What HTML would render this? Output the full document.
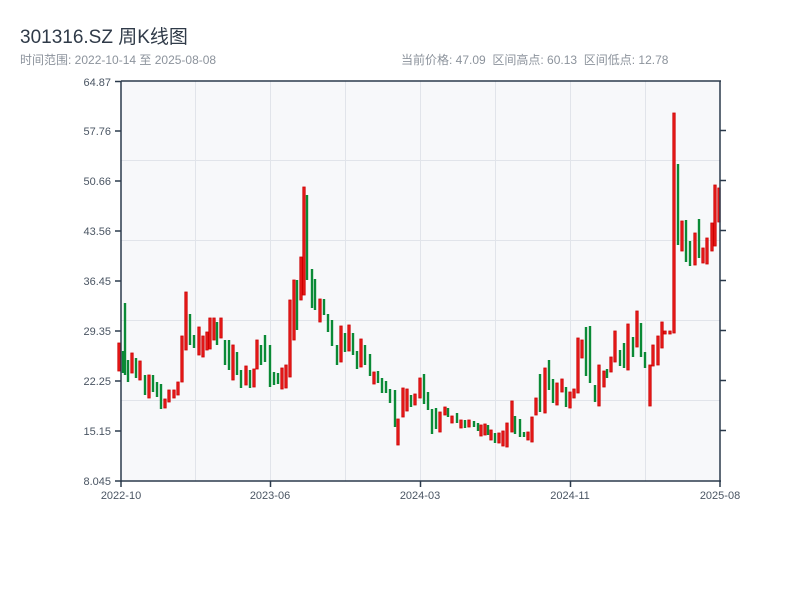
<!DOCTYPE html>
<html><head><meta charset="utf-8"><style>
html,body{margin:0;padding:0;background:#fff;width:800px;height:600px;overflow:hidden;font-family:"Liberation Sans","Noto Sans CJK SC",sans-serif}
.t{position:absolute;left:20px;top:22px;font-size:19px;color:#2f3a48}
.s{position:absolute;left:20px;top:51px;font-size:12px;color:#8c939c}
.r{position:absolute;left:401px;top:51px;font-size:12px;color:#8c939c;white-space:pre}
svg{position:absolute;left:0;top:0}
</style></head><body>
<div class="t">301316.SZ 周K线图</div>
<div class="s">时间范围: 2022-10-14 至 2025-08-08</div>
<div class="r">当前价格: 47.09  区间高点: 60.13  区间低点: 12.78</div>
<svg id="c" width="800" height="600" xmlns="http://www.w3.org/2000/svg" font-family="Liberation Sans, sans-serif" font-size="11" fill="#4a5563">
<rect x="121" y="81" width="599" height="400" fill="#f7f8fa"/>
<g stroke="#e1e4ea" stroke-width="1">
<line x1="195.5" y1="81" x2="195.5" y2="481"/><line x1="270.5" y1="81" x2="270.5" y2="481"/><line x1="345.5" y1="81" x2="345.5" y2="481"/><line x1="420.5" y1="81" x2="420.5" y2="481"/><line x1="495.5" y1="81" x2="495.5" y2="481"/><line x1="570.5" y1="81" x2="570.5" y2="481"/><line x1="645.5" y1="81" x2="645.5" y2="481"/>
<line x1="121" y1="160.5" x2="720" y2="160.5"/><line x1="121" y1="240.5" x2="720" y2="240.5"/><line x1="121" y1="320.5" x2="720" y2="320.5"/><line x1="121" y1="400.5" x2="720" y2="400.5"/>
</g>
<g id="k"></g>
<g stroke="#2b3a4c" stroke-width="1.5">
<line x1="121" y1="81" x2="721" y2="81"/><line x1="121" y1="81" x2="121" y2="482"/><line x1="121" y1="481" x2="721" y2="481"/><line x1="720" y1="81" x2="720" y2="482"/>
<line x1="115" y1="81.5" x2="121" y2="81.5"/><line x1="115" y1="131" x2="121" y2="131"/><line x1="115" y1="181" x2="121" y2="181"/><line x1="115" y1="231" x2="121" y2="231"/><line x1="115" y1="281" x2="121" y2="281"/><line x1="115" y1="331" x2="121" y2="331"/><line x1="115" y1="381" x2="121" y2="381"/><line x1="115" y1="431" x2="121" y2="431"/><line x1="115" y1="481" x2="121" y2="481"/>
<line x1="720" y1="130.5" x2="726" y2="130.5"/><line x1="720" y1="180.5" x2="726" y2="180.5"/><line x1="720" y1="230.5" x2="726" y2="230.5"/><line x1="720" y1="280.5" x2="726" y2="280.5"/><line x1="720" y1="330.5" x2="726" y2="330.5"/><line x1="720" y1="380.5" x2="726" y2="380.5"/><line x1="720" y1="430.5" x2="726" y2="430.5"/>
<line x1="121" y1="481" x2="121" y2="487"/><line x1="270.5" y1="481" x2="270.5" y2="487"/><line x1="420.5" y1="481" x2="420.5" y2="487"/><line x1="570.5" y1="481" x2="570.5" y2="487"/><line x1="720" y1="481" x2="720" y2="487"/>
</g>
<g text-anchor="end">
<text x="111" y="86">64.87</text><text x="111" y="135">57.76</text><text x="111" y="185">50.66</text><text x="111" y="235">43.56</text><text x="111" y="285">36.45</text><text x="111" y="335">29.35</text><text x="111" y="385">22.25</text><text x="111" y="435">15.15</text><text x="111" y="485">8.045</text>
</g>
<g text-anchor="middle">
<text x="121" y="499">2022-10</text><text x="270" y="499">2023-06</text><text x="420" y="499">2024-03</text><text x="570" y="499">2024-11</text><text x="720" y="499">2025-08</text>
</g>
</svg>
<script>
var d=[
[119,343,371,'r'],[123,351,373,'g'],[125,303,375,'g'],[128,360,382,'g'],[132,353,373,'r'],[136,358,378,'g'],[140,361,380,'r'],[145,375,395,'g'],[149,375,398,'r'],[153,375,392,'g'],[157,382,397,'g'],[161,384,409,'g'],[165,399,408,'r'],[169,390,402,'r'],[174,390,398,'r'],[178,382,395,'r'],[182,336,382,'r'],[186,292,350,'r'],[190,314,345,'g'],[194,335,348,'g'],[199,327,355,'r'],[203,336,357,'r'],[207,332,350,'r'],[210,318,349,'r'],[214,318,340,'r'],[217,322,345,'g'],[221,318,338,'r'],[225,340,365,'g'],[229,340,370,'g'],[233,345,380,'r'],[237,352,375,'g'],[241,370,388,'g'],[246,366,385,'r'],[250,370,388,'g'],[254,369,387,'r'],[257,340,369,'r'],[261,345,365,'g'],[265,335,362,'g'],[270,345,387,'g'],[274,372,385,'g'],[278,373,384,'g'],[282,368,389,'r'],[286,365,388,'r'],[290,300,377,'r'],[294,280,340,'r'],[297,280,330,'g'],[301,257,300,'r'],[304,187,295,'r'],[307,195,280,'g'],[312,269,308,'g'],[315,279,310,'g'],[320,299,322,'r'],[324,299,315,'g'],[328,314,332,'g'],[332,320,346,'g'],[337,345,365,'g'],[341,326,362,'r'],[345,333,352,'g'],[349,325,351,'r'],[353,333,355,'g'],[357,351,369,'g'],[361,339,367,'r'],[365,345,365,'g'],[370,354,376,'g'],[374,372,384,'r'],[378,371,383,'g'],[382,378,393,'g'],[386,381,393,'g'],[390,389,403,'g'],[395,390,427,'g'],[398,419,445,'r'],[403,388,417,'r'],[407,389,411,'r'],[411,395,407,'g'],[415,394,405,'r'],[420,378,398,'r'],[424,374,404,'g'],[428,392,410,'g'],[432,409,434,'g'],[436,408,429,'g'],[440,412,432,'r'],[445,407,415,'r'],[448,408,417,'g'],[452,416,423,'r'],[457,413,423,'g'],[461,420,428,'r'],[465,420,428,'g'],[469,420,427,'r'],[474,421,427,'g'],[478,423,431,'g'],[481,425,436,'r'],[485,424,435,'r'],[488,425,435,'g'],[491,430,440,'r'],[495,433,443,'g'],[499,433,443,'r'],[503,431,446,'r'],[507,423,447,'r'],[512,401,432,'r'],[515,416,434,'g'],[520,419,437,'g'],[524,432,437,'g'],[528,432,440,'r'],[532,417,442,'r'],[536,398,415,'r'],[540,374,412,'g'],[545,368,413,'r'],[549,360,390,'g'],[553,379,403,'g'],[557,383,405,'r'],[562,379,392,'r'],[566,387,407,'g'],[570,392,408,'r'],[574,389,398,'r'],[578,338,393,'r'],[582,340,358,'r'],[586,327,376,'g'],[590,326,383,'g'],[595,385,402,'g'],[599,365,406,'r'],[604,371,387,'r'],[607,369,378,'g'],[611,357,372,'r'],[615,331,362,'r'],[620,350,366,'g'],[624,343,368,'g'],[628,324,370,'r'],[633,337,357,'g'],[637,311,347,'r'],[641,323,357,'g'],[645,352,368,'g'],[650,365,406,'r'],[653,345,366,'r'],[658,336,365,'r'],[662,322,348,'r'],[665,331,334,'r'],[670,331,334,'r'],[674,113,333,'r'],[678,164,245,'g'],[682,221,251,'r'],[686,220,262,'g'],[690,241,266,'g'],[695,233,265,'r'],[699,219,258,'g'],[703,248,263,'r'],[707,238,264,'r'],[712,223,251,'r'],[715,185,246,'r'],[719,188,222,'r']
];
var h='';d.forEach(function(c){var col=c[3]=='r';h+='<rect x="'+(c[0]-1.2)+'" y="'+c[1]+'" width="2.4" height="'+Math.max(2,c[2]-c[1])+'" fill="'+(col?'#e81c1c':'#0a8a36')+'"'+(col?' stroke="#cc0000" stroke-width="0.8"':'')+'/>';});
document.getElementById('k').innerHTML=h;
</script>
</body></html>
